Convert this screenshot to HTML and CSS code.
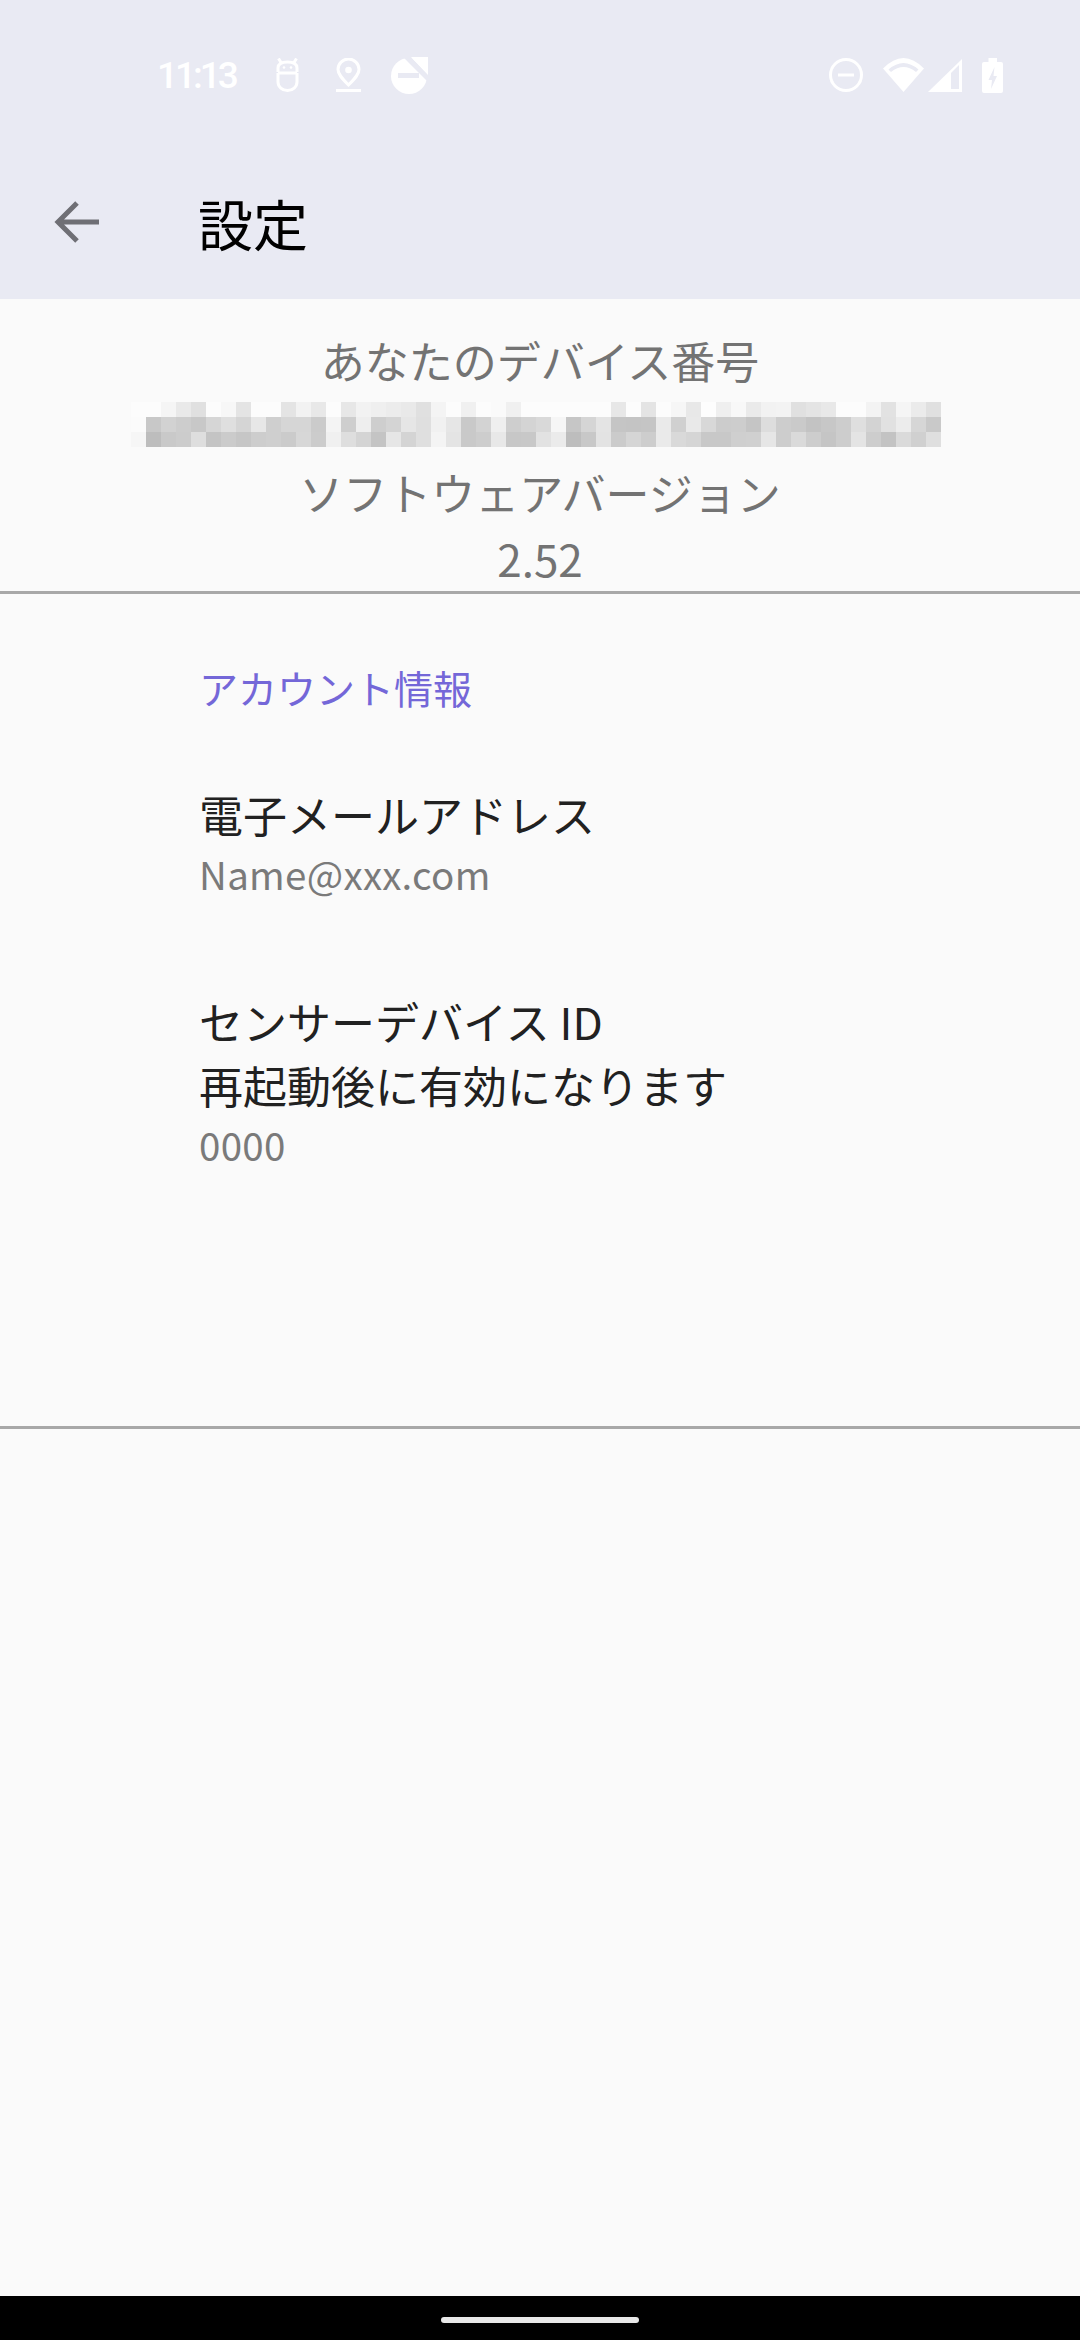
FILE: index.html
```html
<!DOCTYPE html>
<html lang="ja">
<head>
    <meta charset="UTF-8">
    <title>設定</title>
    <link rel="stylesheet" href="styles.css">
</head>
<body>
    <div class="phone">
        <header class="appbar">
            <div class="statusbar">
                <div class="status-left">
                    <span class="clock">11:13</span>
                    <svg class="ic-bot" width="23" height="34" viewBox="0 0 23 34" fill="none" stroke="#fff" stroke-width="3"><path d="M2 14V10C2 6 6 4 11.500 4S21 6 21 10v4M2 15h19M2 15v9a9.500 8.500 0 0 0 19 0v-9M2.500 0.500l2.500 4M20.500 0.500l-2.500 4"/><circle cx="8" cy="9.500" r="1.300" fill="#fff" stroke="none"/><circle cx="15" cy="9.500" r="1.300" fill="#fff" stroke="none"/></svg>
                    <svg class="ic-pin" width="25" height="34" viewBox="0 0 25 34" fill="none" stroke="#fff" stroke-width="3"><path d="M12.500 27C5.500 20 2 16 2 11.500a10.500 10.500 0 0 1 21 0C23 16 19.500 20 12.500 27z"/><circle cx="12.500" cy="12" r="3.300" fill="#fff" stroke="none"/><path d="M0 32.500h25"/></svg>
                    <svg class="ic-dnd" width="37" height="37" viewBox="0 0 37 37"><circle cx="18" cy="19" r="18" fill="#fff"/><path d="M14-2 40 24" stroke="#e9eaf3" stroke-width="5.600"/><path d="M20 0h17v18z" fill="#fff"/><rect x="7" y="16" width="21" height="5" fill="#e9eaf3"/></svg>
                </div>
                <div class="status-right">
                    <svg class="ic-dnd-on" width="34" height="34" viewBox="0 0 34 34" fill="none" stroke="#fff" stroke-width="3"><circle cx="17" cy="17" r="15.500"/><path d="M9 17h16"/></svg>
                    <svg class="ic-wifi" width="41" height="34" viewBox="0 0 41 34"><path d="M0 10.500Q20.500-10.500 41 10.500L20.500 34z" fill="#fff"/><path d="M5.500 11.500Q20.500-1.500 35.500 11.500L33 14Q20.500 4 8 14z" fill="#e9eaf3"/></svg>
                    <svg class="ic-signal" width="34" height="33" viewBox="0 0 34 33"><path d="M0 33 34 0v33z" fill="#fff"/><path d="M23 14l8-8v24h-8z" fill="#e9eaf3"/></svg>
                    <svg class="ic-battery" width="21" height="35" viewBox="0 0 21 35"><path d="M6.500 0h8.500v4h4a2 2 0 0 1 2 2v27a2 2 0 0 1-2 2H2a2 2 0 0 1-2-2V6a2 2 0 0 1 2-2h4.500z" fill="#fff"/><path d="M12.500 9 6.500 22H10L9 31l6-13h-3.500z" fill="#e9eaf3"/></svg>
                </div>
            </div>
            <div class="toolbar">
                <svg class="back" width="46" height="44" viewBox="0 0 46 44" fill="none" stroke="#6f6f75" stroke-width="5"><path d="M45 22H5M23 3 4 22l19 19"/></svg>
                <h1>設定</h1>
            </div>
        </header>
        <main class="content">
            <section class="about">
                <p>あなたのデバイス番号</p>
                <svg class="mosaic" width="810" height="45" viewBox="0 0 54 3" shape-rendering="crispEdges">
                    <!-- row 0 -->
                    <rect x="0" y="0" width="1" height="1" fill="#fcfcfc"/><rect x="1" y="0" width="1" height="1" fill="#fcfcfc"/><rect x="2" y="0" width="1" height="1" fill="#f5f5f5"/><rect x="3" y="0" width="1" height="1" fill="#e9e9e9"/><rect x="4" y="0" width="1" height="1" fill="#e0e0e0"/><rect x="5" y="0" width="1" height="1" fill="#fcfcfc"/><rect x="6" y="0" width="1" height="1" fill="#f7f7f7"/><rect x="7" y="0" width="1" height="1" fill="#e4e4e4"/><rect x="8" y="0" width="1" height="1" fill="#fcfcfc"/><rect x="9" y="0" width="1" height="1" fill="#fcfcfc"/><rect x="10" y="0" width="1" height="1" fill="#e4e4e4"/><rect x="11" y="0" width="1" height="1" fill="#f2f2f2"/><rect x="12" y="0" width="1" height="1" fill="#e8e8e8"/><rect x="13" y="0" width="1" height="1" fill="#fcfcfc"/><rect x="14" y="0" width="1" height="1" fill="#e7e7e7"/><rect x="15" y="0" width="1" height="1" fill="#f2f2f2"/><rect x="16" y="0" width="1" height="1" fill="#efefef"/><rect x="17" y="0" width="1" height="1" fill="#ececec"/>
                    <rect x="18" y="0" width="1" height="1" fill="#e9e9e9"/><rect x="19" y="0" width="1" height="1" fill="#e0e0e0"/><rect x="20" y="0" width="1" height="1" fill="#f4f4f4"/><rect x="21" y="0" width="1" height="1" fill="#fcfcfc"/><rect x="22" y="0" width="1" height="1" fill="#f0f0f0"/><rect x="23" y="0" width="1" height="1" fill="#fcfcfc"/><rect x="24" y="0" width="1" height="1" fill="#fafafa"/><rect x="25" y="0" width="1" height="1" fill="#f0f0f0"/><rect x="26" y="0" width="1" height="1" fill="#fcfcfc"/><rect x="27" y="0" width="1" height="1" fill="#fcfcfc"/><rect x="28" y="0" width="1" height="1" fill="#fcfcfc"/><rect x="29" y="0" width="1" height="1" fill="#fcfcfc"/><rect x="30" y="0" width="1" height="1" fill="#fcfcfc"/><rect x="31" y="0" width="1" height="1" fill="#fcfcfc"/><rect x="32" y="0" width="1" height="1" fill="#e7e7e7"/><rect x="33" y="0" width="1" height="1" fill="#fcfcfc"/><rect x="34" y="0" width="1" height="1" fill="#e4e4e4"/><rect x="35" y="0" width="1" height="1" fill="#fcfcfc"/>
                    <rect x="36" y="0" width="1" height="1" fill="#f6f6f6"/><rect x="37" y="0" width="1" height="1" fill="#e8e8e8"/><rect x="38" y="0" width="1" height="1" fill="#fdfdfd"/><rect x="39" y="0" width="1" height="1" fill="#efefef"/><rect x="40" y="0" width="1" height="1" fill="#f8f8f8"/><rect x="41" y="0" width="1" height="1" fill="#eaeaea"/><rect x="42" y="0" width="1" height="1" fill="#f2f2f2"/><rect x="43" y="0" width="1" height="1" fill="#f3f3f3"/><rect x="44" y="0" width="1" height="1" fill="#e0e0e0"/><rect x="45" y="0" width="1" height="1" fill="#e4e4e4"/><rect x="46" y="0" width="1" height="1" fill="#e8e8e8"/><rect x="47" y="0" width="1" height="1" fill="#fcfcfc"/><rect x="48" y="0" width="1" height="1" fill="#fcfcfc"/><rect x="49" y="0" width="1" height="1" fill="#f3f3f3"/><rect x="50" y="0" width="1" height="1" fill="#e2e2e2"/><rect x="51" y="0" width="1" height="1" fill="#f5f5f5"/><rect x="52" y="0" width="1" height="1" fill="#ebebeb"/><rect x="53" y="0" width="1" height="1" fill="#e0e0e0"/>
                    <!-- row 1 -->
                    <rect x="0" y="1" width="1" height="1" fill="#fbfbfb"/><rect x="1" y="1" width="1" height="1" fill="#c8c8c8"/><rect x="2" y="1" width="1" height="1" fill="#d2d2d2"/><rect x="3" y="1" width="1" height="1" fill="#cdcdcd"/><rect x="4" y="1" width="1" height="1" fill="#c8c8c8"/><rect x="5" y="1" width="1" height="1" fill="#d6d6d6"/><rect x="6" y="1" width="1" height="1" fill="#dfdfdf"/><rect x="7" y="1" width="1" height="1" fill="#d5d5d5"/><rect x="8" y="1" width="1" height="1" fill="#e7e7e7"/><rect x="9" y="1" width="1" height="1" fill="#cfcfcf"/><rect x="10" y="1" width="1" height="1" fill="#d6d6d6"/><rect x="11" y="1" width="1" height="1" fill="#d6d6d6"/><rect x="12" y="1" width="1" height="1" fill="#cbcbcb"/><rect x="13" y="1" width="1" height="1" fill="#f4f4f4"/><rect x="14" y="1" width="1" height="1" fill="#cecece"/><rect x="15" y="1" width="1" height="1" fill="#eeeeee"/><rect x="16" y="1" width="1" height="1" fill="#cecece"/><rect x="17" y="1" width="1" height="1" fill="#d4d4d4"/>
                    <rect x="18" y="1" width="1" height="1" fill="#e6e6e6"/><rect x="19" y="1" width="1" height="1" fill="#dfdfdf"/><rect x="20" y="1" width="1" height="1" fill="#f1f1f1"/><rect x="21" y="1" width="1" height="1" fill="#e6e6e6"/><rect x="22" y="1" width="1" height="1" fill="#c9c9c9"/><rect x="23" y="1" width="1" height="1" fill="#d3d3d3"/><rect x="24" y="1" width="1" height="1" fill="#efefef"/><rect x="25" y="1" width="1" height="1" fill="#cecece"/><rect x="26" y="1" width="1" height="1" fill="#d4d4d4"/><rect x="27" y="1" width="1" height="1" fill="#d9d9d9"/><rect x="28" y="1" width="1" height="1" fill="#f6f6f6"/><rect x="29" y="1" width="1" height="1" fill="#c6c6c6"/><rect x="30" y="1" width="1" height="1" fill="#d5d5d5"/><rect x="31" y="1" width="1" height="1" fill="#e4e4e4"/><rect x="32" y="1" width="1" height="1" fill="#c5c5c5"/><rect x="33" y="1" width="1" height="1" fill="#c4c4c4"/><rect x="34" y="1" width="1" height="1" fill="#c5c5c5"/><rect x="35" y="1" width="1" height="1" fill="#eaeaea"/>
                    <rect x="36" y="1" width="1" height="1" fill="#d0d0d0"/><rect x="37" y="1" width="1" height="1" fill="#e9e9e9"/><rect x="38" y="1" width="1" height="1" fill="#d8d8d8"/><rect x="39" y="1" width="1" height="1" fill="#cccccc"/><rect x="40" y="1" width="1" height="1" fill="#cdcdcd"/><rect x="41" y="1" width="1" height="1" fill="#c5c5c5"/><rect x="42" y="1" width="1" height="1" fill="#dddddd"/><rect x="43" y="1" width="1" height="1" fill="#cdcdcd"/><rect x="44" y="1" width="1" height="1" fill="#cacaca"/><rect x="45" y="1" width="1" height="1" fill="#c3c3c3"/><rect x="46" y="1" width="1" height="1" fill="#c7c7c7"/><rect x="47" y="1" width="1" height="1" fill="#cdcdcd"/><rect x="48" y="1" width="1" height="1" fill="#dfdfdf"/><rect x="49" y="1" width="1" height="1" fill="#d3d3d3"/><rect x="50" y="1" width="1" height="1" fill="#e1e1e1"/><rect x="51" y="1" width="1" height="1" fill="#ececec"/><rect x="52" y="1" width="1" height="1" fill="#d6d6d6"/><rect x="53" y="1" width="1" height="1" fill="#c9c9c9"/>
                    <!-- row 2 -->
                    <rect x="0" y="2" width="1" height="1" fill="#f6f6f6"/><rect x="1" y="2" width="1" height="1" fill="#bdbdbd"/><rect x="2" y="2" width="1" height="1" fill="#c9c9c9"/><rect x="3" y="2" width="1" height="1" fill="#cccccc"/><rect x="4" y="2" width="1" height="1" fill="#dedede"/><rect x="5" y="2" width="1" height="1" fill="#c4c4c4"/><rect x="6" y="2" width="1" height="1" fill="#cbcbcb"/><rect x="7" y="2" width="1" height="1" fill="#c6c6c6"/><rect x="8" y="2" width="1" height="1" fill="#cdcdcd"/><rect x="9" y="2" width="1" height="1" fill="#cfcfcf"/><rect x="10" y="2" width="1" height="1" fill="#cbcbcb"/><rect x="11" y="2" width="1" height="1" fill="#d7d7d7"/><rect x="12" y="2" width="1" height="1" fill="#cccccc"/><rect x="13" y="2" width="1" height="1" fill="#f0f0f0"/><rect x="14" y="2" width="1" height="1" fill="#dedede"/><rect x="15" y="2" width="1" height="1" fill="#d4d4d4"/><rect x="16" y="2" width="1" height="1" fill="#c4c4c4"/><rect x="17" y="2" width="1" height="1" fill="#e6e6e6"/>
                    <rect x="18" y="2" width="1" height="1" fill="#d4d4d4"/><rect x="19" y="2" width="1" height="1" fill="#dfdfdf"/><rect x="20" y="2" width="1" height="1" fill="#f4f4f4"/><rect x="21" y="2" width="1" height="1" fill="#e4e4e4"/><rect x="22" y="2" width="1" height="1" fill="#c9c9c9"/><rect x="23" y="2" width="1" height="1" fill="#cdcdcd"/><rect x="24" y="2" width="1" height="1" fill="#e8e8e8"/><rect x="25" y="2" width="1" height="1" fill="#c7c7c7"/><rect x="26" y="2" width="1" height="1" fill="#c8c8c8"/><rect x="27" y="2" width="1" height="1" fill="#e2e2e2"/><rect x="28" y="2" width="1" height="1" fill="#ebebeb"/><rect x="29" y="2" width="1" height="1" fill="#bdbdbd"/><rect x="30" y="2" width="1" height="1" fill="#c8c8c8"/><rect x="31" y="2" width="1" height="1" fill="#e3e3e3"/><rect x="32" y="2" width="1" height="1" fill="#cbcbcb"/><rect x="33" y="2" width="1" height="1" fill="#d5d5d5"/><rect x="34" y="2" width="1" height="1" fill="#cdcdcd"/><rect x="35" y="2" width="1" height="1" fill="#eaeaea"/>
                    <rect x="36" y="2" width="1" height="1" fill="#d9d9d9"/><rect x="37" y="2" width="1" height="1" fill="#d5d5d5"/><rect x="38" y="2" width="1" height="1" fill="#c8c8c8"/><rect x="39" y="2" width="1" height="1" fill="#c8c8c8"/><rect x="40" y="2" width="1" height="1" fill="#cfcfcf"/><rect x="41" y="2" width="1" height="1" fill="#d0d0d0"/><rect x="42" y="2" width="1" height="1" fill="#e6e6e6"/><rect x="43" y="2" width="1" height="1" fill="#cdcdcd"/><rect x="44" y="2" width="1" height="1" fill="#dadada"/><rect x="45" y="2" width="1" height="1" fill="#cdcdcd"/><rect x="46" y="2" width="1" height="1" fill="#c5c5c5"/><rect x="47" y="2" width="1" height="1" fill="#cdcdcd"/><rect x="48" y="2" width="1" height="1" fill="#e4e4e4"/><rect x="49" y="2" width="1" height="1" fill="#cdcdcd"/><rect x="50" y="2" width="1" height="1" fill="#c3c3c3"/><rect x="51" y="2" width="1" height="1" fill="#dadada"/><rect x="52" y="2" width="1" height="1" fill="#d0d0d0"/><rect x="53" y="2" width="1" height="1" fill="#dfdfdf"/>
                </svg>
                <p class="version-label">ソフトウェアバージョン</p>
                <p class="version">2.52</p>
            </section>
            <section class="account">
                <h2>アカウント情報</h2>
                <div class="pref">
                    <div class="pref-title">電子メールアドレス</div>
                    <div class="pref-sub">Name@xxx.com</div>
                </div>
                <div class="pref">
                    <div class="pref-title">センサーデバイス ID<br>再起動後に有効になります</div>
                    <div class="pref-sub">0000</div>
                </div>
            </section>
        </main>
        <footer class="navbar"><span class="handle"></span></footer>
    </div>
</body>
</html>
```
FILE: styles.css
```css
* { box-sizing: border-box; }
html, body { margin: 0; }
body { font-family: "Noto Sans CJK JP", "Noto Sans", sans-serif; background: #fafafa; }
.phone { width: 1080px; height: 2340px; display: flex; flex-direction: column; overflow: hidden; }

.appbar { height: 299px; background: #e9eaf3; }
.statusbar { height: 150px; padding: 0 77px 0 157px; display: flex; justify-content: space-between; align-items: center; }
.status-left, .status-right { display: flex; align-items: center; }
.clock { color: #fff; font-family: Roboto, sans-serif; font-weight: 500; font-size: 37px; letter-spacing: -3px; width: 79px; }
.ic-bot { margin-left: 40px; }
.ic-pin { margin-left: 37px; }
.ic-dnd { margin-left: 30px; }
.ic-wifi { margin-left: 20px; }
.ic-signal { margin-left: 4px; }
.ic-battery { margin-left: 20px; }
.toolbar { display: flex; align-items: center; height: 143px; padding-left: 54px; }
.toolbar h1 { margin: 0 0 0 98px; font-size: 55px; font-weight: 400; color: #000; }

.content { flex: 1; }
.about { padding: 31px 0 3px; border-bottom: 3px solid #a8a8a8; text-align: center; color: #737373; font-size: 44px; }
.about p { margin: 0; line-height: 60px; }
.mosaic { display: block; margin: 12px 0 0 131px; }
.about .version-label { margin-top: 15px; }
.about .version { margin-top: 6px; }

.account { height: 835px; border-bottom: 3px solid #a8a8a8; padding: 66px 0 0 199px; }
.account h2 { margin: 0; font-size: 39px; line-height: 54px; font-weight: 400; color: #7467d8; }
.pref { margin-top: 88px; }
.account h2 + .pref { margin-top: 68px; }
.pref-title { font-size: 44px; color: #212121; line-height: 64px; }
.pref-sub { font-size: 38.5px; color: #7a7a7a; line-height: 55px; letter-spacing: 0.3px; }

.navbar { height: 44px; padding-top: 4px; background: #000; display: flex; align-items: center; justify-content: center; }
.handle { width: 198px; height: 6px; border-radius: 3px; background: #e8e8e8; }
```
